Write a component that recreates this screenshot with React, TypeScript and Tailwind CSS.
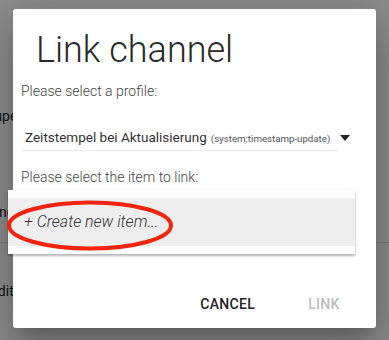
import React from 'react';

const font = { fontFamily: 'Roboto, "Liberation Sans", sans-serif' };

const App: React.FC = () => {
  return (
    <div className="relative w-[389px] h-[340px] overflow-hidden bg-white text-[#333]" style={font}>
      {/* page behind the dialog */}
      <div className="flex flex-col text-[14px] leading-5 text-[#222]">
        <div className="h-[106px]" />
        <div className="-ml-[14px]">Super</div>
        <div className="h-[76px]" />
        <div className="-ml-[9px]">one</div>
        <div className="h-[21px] border-b border-[#ddd]" />
        <div className="h-[38px]" />
        <div className="-ml-[10px]">Edit</div>
      </div>

      {/* overlay */}
      <div className="absolute inset-0 flex items-center justify-center bg-black/45">
        <div className="flex flex-col w-[363px] h-[319px] mt-[-3px] bg-white rounded-[3px] shadow-[0_11px_15px_-7px_rgba(0,0,0,0.2),0_24px_38px_3px_rgba(0,0,0,0.14),0_9px_46px_8px_rgba(0,0,0,0.12)]">
          <h1 className="pt-[20px] pl-[23px] text-[36px] leading-[42px] font-light text-[#2a2a2a]">Link channel</h1>

          <p className="mt-[10px] pl-2 text-[14px] leading-5 font-light text-[#444]">Please select a profile:</p>

          <div className="mt-[26px] ml-[9px] flex items-center">
            <div className="w-[316px] pl-[3px] pb-[1px] border-b border-[#e8e8e8] leading-5 whitespace-nowrap">
              <span className="text-[13.5px] text-[#333]">Zeitstempel bei Aktualisierung</span>
              <span className="ml-[4px] text-[9.7px] text-[#555]">(system:timestamp-update)</span>
            </div>
            <svg width="10" height="6" viewBox="0 0 10 6" className="ml-[2px] mb-[2px]">
              <path d="M0 0 L10 0 L5 6 Z" fill="#222" />
            </svg>
          </div>

          <p className="mt-[16px] pl-2 text-[14px] leading-5 font-light text-[#444]">Please select the item to link:</p>

          <div className="mt-auto mb-[6px] flex justify-end pr-[20px] gap-[29px]">
            <button className="h-9 min-w-[64px] px-2 text-[14px] font-medium tracking-[0.02em] text-[#222] leading-5">CANCEL</button>
            <button className="h-9 min-w-[64px] px-2 text-[14px] font-medium tracking-[0.02em] text-[#bdbdbd] leading-5">LINK</button>
          </div>
        </div>
      </div>

      {/* item menu */}
      <div className="absolute left-[8px] top-[190px] w-[347px] h-[64px] py-2 bg-white shadow-[0_2px_2px_0_rgba(0,0,0,0.24),0_1px_4px_0_rgba(0,0,0,0.1)]">
        <div className="h-12 flex items-center pl-[16px] bg-[#eeeeee] text-[16px] italic font-light text-[#333]">
          + Create new item...
        </div>
      </div>

      {/* annotation */}
      <svg className="absolute left-0 top-0 pointer-events-none" width="389" height="340">
        <ellipse cx="90" cy="225.5" rx="81" ry="23" fill="none" stroke="#f2240c" strokeWidth="4" />
      </svg>
    </div>
  );
};

export default App;
